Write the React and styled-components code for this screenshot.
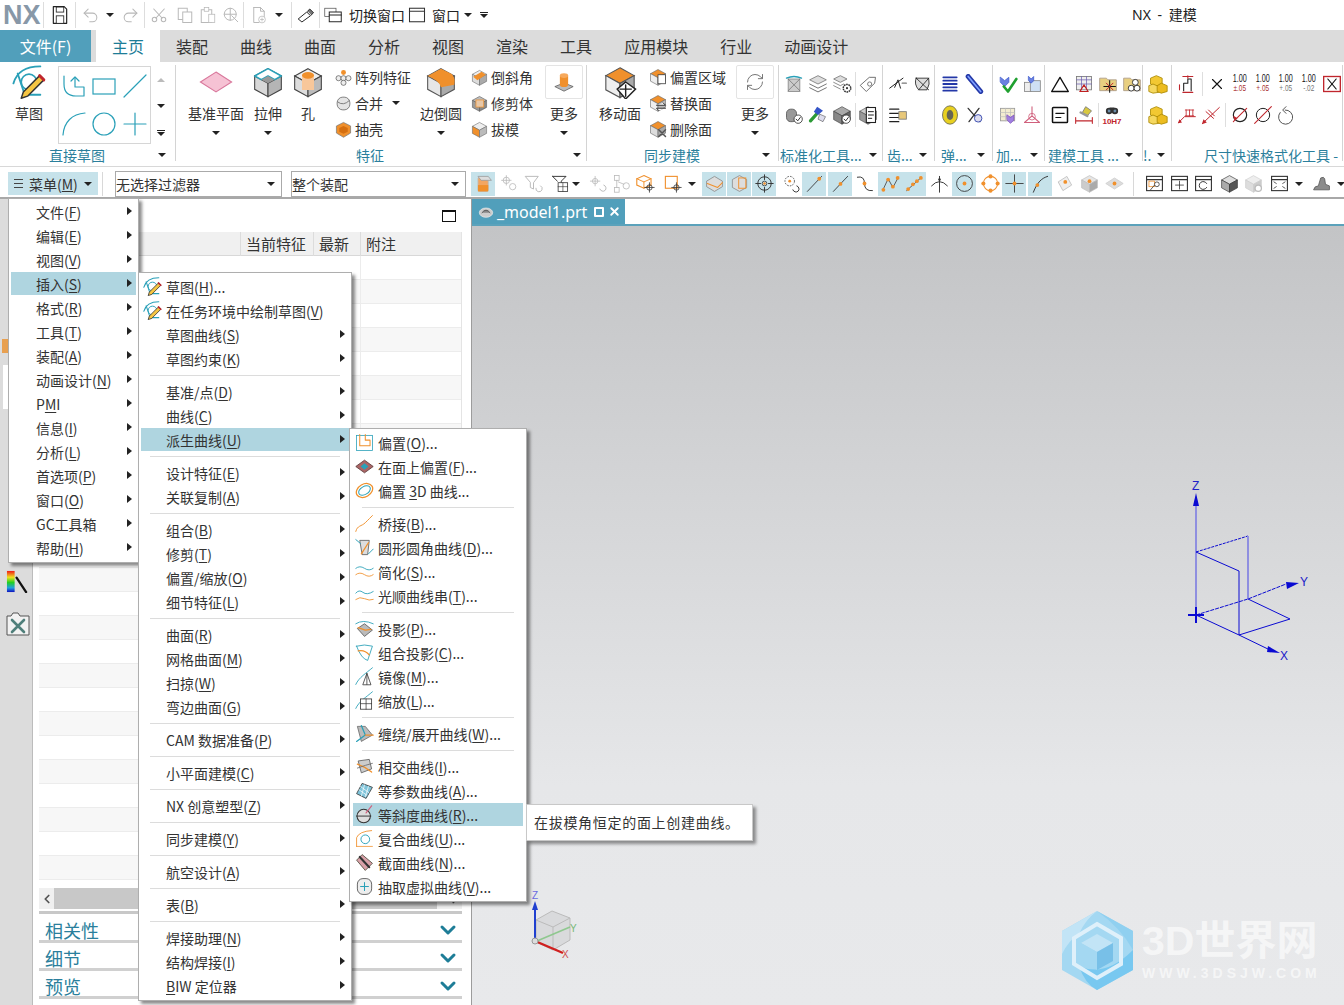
import React from "react";
import styled, { createGlobalStyle } from "styled-components";
import { RefreshCw, Undo2, Redo2, ChevronLeft, ChevronRight, ChevronDown, X } from "lucide-react";

const TEAL = "#2aa0b8";
const ORANGE = "#f0902c";
const DARK = "#333";
const LABEL = "#2b7f9c";
const FADE = "#b8b8b8";
const RED = "#c0262d";

const GlobalStyle = createGlobalStyle`
  html, body { margin: 0; padding: 0; background: #fff; }
  body {
    font-family: "Noto Sans CJK SC", "Noto Sans", sans-serif;
    font-size: 14px;
    color: #333;
    overflow: hidden;
  }
`;

const cube = (t, l, r, stroke = "#666") => (
  <>
    <polygon points="12,2 22,7.5 12,13 2,7.5" fill={t} stroke={stroke} strokeWidth=".8" />
    <polygon points="2,7.5 12,13 12,23 2,17.5" fill={l} stroke={stroke} strokeWidth=".8" />
    <polygon points="22,7.5 12,13 12,23 22,17.5" fill={r} stroke={stroke} strokeWidth=".8" />
  </>
);
const p = (d, c = DARK, w = 1.3, fill = "none") => <path d={d} stroke={c} strokeWidth={w} fill={fill} strokeLinecap="round" strokeLinejoin="round" />;
const dot = (x, y, r = 2.4, c = ORANGE) => <circle cx={x} cy={y} r={r} fill={c} />;
const target = (x, y, c = DARK) => (
  <>
    <circle cx={x} cy={y} r="3.4" fill="none" stroke={c} strokeWidth="1" />
    {p(`M${x - 6} ${y}H${x + 6}M${x} ${y - 6}V${y + 6}`, c, 1)}
  </>
);
const winFrame = (
  <>
    <rect x="2" y="3" width="20" height="18" fill="#fff" stroke={DARK} strokeWidth="1.4" />
    {p("M2 7H22", DARK, 1.6)}
  </>
);

const ICONS = {
  sketch: (
    <>
      {p("M1 13C3 6 9 1 20 1", TEAL)}
      <circle cx="12" cy="12" r="5.5" fill="none" stroke={TEAL} strokeWidth="1.2" />
      {p("M4 6L9 21H20", TEAL)}
      {p("M22.5 10.5L11 22l-4.5 1.5L8 19 19.5 7.5z", "#333", 1, "#f5c542")}
      {p("M19.5 7.5l3 3", RED, 2)}
    </>
  ),
  profile: (
    <>
      {p("M2 2V10Q2 22 14 22H22V13H13V4", TEAL, 1.2)}
      {p("M9 7l4-4 4 4", TEAL, 1.2)}
    </>
  ),
  rect: <rect x="1" y="5" width="22" height="15" fill="none" stroke={TEAL} strokeWidth="1.2" />,
  line: p("M1 23L23 1", TEAL, 1.2),
  arc: p("M1 23C2 10 10 2 23 1", TEAL, 1.2),
  circle: <circle cx="12" cy="12" r="11" fill="none" stroke={TEAL} strokeWidth="1.2" />,
  plus: p("M12 1V23M1 12H23", TEAL, 1.2),
  datum: <polygon points="12,5 23,12 12,19 1,12" fill="#f6c2d4" stroke="#d9789c" strokeWidth=".8" />,
  extrude: (
    <>
      {cube("#eee", "#d8d8d8", "#b5b5b5", "#444")}
      {p("M2 7.5L12 2L22 7.5L17 10.3L12 7.5L7 10.3Z", TEAL, 1.1, "#fff")}
      <polygon points="7,10.3 12,7.5 17,10.3 12,13" fill="#999" />
    </>
  ),
  hole: (
    <>
      {cube("#eee", "#ddd", "#bbb", "#444")}
      <rect x="7.5" y="7" width="9" height="11" fill="#f8c79a" />
      <ellipse cx="12" cy="7" rx="4.5" ry="2.5" fill={ORANGE} />
    </>
  ),
  blend: (
    <>
      {cube("#eee", "#e6e6e6", "#aaa", "#555")}
      <path d="M2 7.5L12 2L20 6Q23 9 22 14L12 16Q11 11 2 7.5Z" fill={ORANGE} />
    </>
  ),
  moreFeat: (
    <>
      <polygon points="12,13 22,17 12,22 2,17" fill="#bbb" stroke="#555" strokeWidth=".8" />
      <rect x="7.5" y="5" width="9" height="10" fill={ORANGE} />
      <ellipse cx="12" cy="5" rx="4.5" ry="2.5" fill="#f7a95c" />
      <ellipse cx="12" cy="15" rx="4.5" ry="2.5" fill={ORANGE} />
    </>
  ),
  moveFace: (
    <>
      {cube(ORANGE, "#eee", "#aaa", "#555")}
      <polygon points="16,12 23,17 16,24 10,17" fill="#fff" stroke="#222" strokeWidth="1" />
      {p("M16 14V22M12 17H20", "#222", 1)}
    </>
  ),
  pattern: (
    <>
      <circle cx="12" cy="5" r="3.5" fill={ORANGE} />
      <circle cx="5" cy="13" r="3.6" fill="#eee" stroke="#555" />
      <circle cx="12" cy="13" r="3.6" fill="#eee" stroke="#555" />
      <circle cx="19" cy="13" r="3.6" fill="#eee" stroke="#555" />
      <circle cx="12" cy="19.5" r="3.6" fill="#eee" stroke="#555" />
    </>
  ),
  unite: (
    <>
      <rect x="3" y="3" width="18" height="18" rx="8" fill="#e4e4e4" stroke="#555" />
      {p("M4 10Q12 16 20 8", "#555", 1)}
    </>
  ),
  shell: (
    <>
      <polygon points="12,2 22,7 22,17 12,23 2,17 2,7" fill={ORANGE} stroke="#777" />
      <polygon points="12,7 18,10 18,15 12,18 6,15 6,10" fill="#d56f10" />
    </>
  ),
  chamfer: (
    <>
      {cube("#eee", "#ddd", "#aaa")}
      <polygon points="3,11 15,4 21,8 9,16" fill={ORANGE} />
    </>
  ),
  trim: (
    <>
      {cube("#bbb", "#999", "#888", "#555")}
      <rect x="7" y="7" width="11" height="10" fill="#e8c8a8" stroke={ORANGE} />
    </>
  ),
  draft: cube("#eee", ORANGE, "#bbb"),
  offsetRegion: (
    <>
      {cube(ORANGE, "#eee", "#bbb")}
      <rect x="12" y="9" width="10" height="12" fill="#fff" stroke="#333" />
    </>
  ),
  replaceFace: (
    <>
      {cube(ORANGE, "#eee", "#bbb")}
      {p("M10 15H22l-3-3M22 19H10l3 3", "#222", 1.2, "#fff")}
    </>
  ),
  deleteFace: (
    <>
      {cube(ORANGE, "#ddd", "#aaa")}
      {p("M13 13l9 9M22 13l-9 9", "#555", 2)}
    </>
  ),
  normalize: (
    <>
      <rect x="5" y="6" width="14" height="15" fill="#ccc" stroke="#888" />
      {p("M3 5Q12 1 21 5", TEAL, 1.6)}
      {p("M5 20L19 6M5 6L19 20", "#777", 1)}
    </>
  ),
  layers: (
    <>
      <polygon points="12,2 22,7 12,12 2,7" fill="#ddd" stroke="#777" />
      {p("M2 12l10 5 10-5", "#777", 1.2)}
      {p("M2 16.5l10 5 10-5", "#777", 1.2)}
    </>
  ),
  gearStack: (
    <>
      <polygon points="10,2 18,6 10,10 2,6" fill="#ddd" stroke="#777" />
      {p("M2 10l8 4 4-2M2 14l8 4", "#777", 1)}
      <circle cx="18" cy="17" r="4.5" fill="#fff" stroke="#333" strokeWidth="1.8" strokeDasharray="2 .8" />
      <circle cx="18" cy="17" r="1.3" fill="#333" />
    </>
  ),
  tag: (
    <>
      {p("M14 4l7 0-1 7-10 10-7-7z", "#666", 1.1, "#fff")}
      <circle cx="14" cy="12" r="2.5" fill="none" stroke="#666" />
    </>
  ),
  cylCheck: (
    <>
      <rect x="3" y="5" width="12" height="15" rx="5" fill="#999" stroke="#555" />
      <circle cx="17" cy="17" r="5" fill="#fff" stroke="#333" />
      {p("M14.5 17l2 2 3-4", "#333", 1.2)}
    </>
  ),
  wrench: (
    <>
      {p("M3 19L12 9", "#2c9a36", 4)}
      <polygon points="11,2 18,7 12,12 7,8" fill="#3555c8" />
      <polygon points="14,11 21,14 18,20 12,17" fill="#dde" stroke="#333333" strokeWidth=".6" />
    </>
  ),
  boxCheck: (
    <>
      {cube("#aaa", "#888", "#666", "#444")}
      <circle cx="17" cy="17" r="5" fill="#fff" stroke="#333" />
      {p("M14.5 17l2 2 3-4", "#333", 1.2)}
    </>
  ),
  doc: (
    <>
      {cube("#ccc", "#999", "#888", "#555")}
      <rect x="10" y="3" width="11" height="18" fill="#fff" stroke="#222" strokeWidth="1.3" />
      {p("M12.5 8h6M12.5 12h6M12.5 16h4", "#222", 1.2)}
    </>
  ),
  lineSign: (
    <>
      {p("M2 17L18 5", "#222", 1.2)}
      {p("M8 16l4-9 3 10", "#222", 1.2)}
      {p("M17 11h5", "#777", 1.6)}
    </>
  ),
  grayShell: (
    <>
      {p("M5 5L20 5Q22 12 18 19L8 19Q2 12 5 5Z", "#222", 1, "#ddd")}
      {p("M5 5L20 19M20 5L8 19", "#222", 1)}
    </>
  ),
  lines: (
    <>
      {p("M2 5h11M2 10h11M2 15h11M2 20h11", "#222", 1.4)}
      <rect x="13" y="8" width="9" height="9" fill="#e8c87a" stroke="#777" />
    </>
  ),
  coil: p("M4 4h16M4 8h16M4 12h16M4 16h16M4 20h16", "#2438a8", 2.2),
  spring: (
    <>
      {p("M5 3L20 21", "#2438a8", 6)}
      {p("M5 3L20 21", "#7fa0ff", 2)}
    </>
  ),
  washer: (
    <>
      <ellipse cx="12" cy="12" rx="9" ry="11" fill="#e8d020" stroke="#665" />
      <ellipse cx="12" cy="12" rx="4" ry="6" fill="#665" />
    </>
  ),
  cutter: (
    <>
      {p("M5 4l14 16M18 4L6 20", "#333", 1.6)}
      <circle cx="17" cy="16" r="4.5" fill="#dde" stroke="#2438a8" />
    </>
  ),
  partCheck: (
    <>
      {p("M3 4l5 4 5-4v6l-5 5-5-5z", "#4460d0", 1, "#6a80e0")}
      {p("M7 15l5 6L22 6", "#20a030", 3.2)}
    </>
  ),
  partSheet: (
    <>
      <rect x="3" y="10" width="8" height="11" fill="#eee" stroke="#888" />
      <rect x="10" y="8" width="12" height="13" fill="#cfe0f4" stroke="#888" />
      {p("M8 3l3 3 3-3v5l-3 3-3-3z", "#4460d0", 1, "#6a80e0")}
    </>
  ),
  gridPart: (
    <>
      <rect x="3" y="4" width="17" height="15" fill="#f3ecd0" stroke="#999" />
      {p("M3 9h17M3 14h17M9 4v15M15 4v15", "#bbb", 0.8)}
      {p("M11 12l4 3 4-3v6l-4 4-4-4z", "#8050c0", 1, "#a080e0")}
    </>
  ),
  axisPink: (
    <>
      {p("M12 2v11L3 21M12 13l9 8M3 21h18", "#d0607c", 1.3)}
      <circle cx="12" cy="14" r="4" fill="none" stroke="#d0607c" />
    </>
  ),
  triangle: p("M12 4L22 21H2Z", "#111", 1.6),
  tablePin: (
    <>
      <rect x="3" y="3" width="18" height="16" fill="#eee" stroke="#777" />
      {p("M3 7h18M9 3v16M15 3v16M3 12h18", "#7060b0", 0.9)}
      {p("M12 13l5 8H7z", "#c02020", 1.4)}
    </>
  ),
  folderCross: (
    <>
      <path d="M2 5h8l2 2h10v13H2z" fill="#e8cf80" stroke="#a98" />
      {p("M14 8v14M7 15h14", "#111", 1.2)}
      {p("M10 11l8 8M18 11l-8 8", RED, 1.2)}
    </>
  ),
  folderNodes: (
    <>
      <path d="M2 5h8l2 2h10v13H2z" fill="#e8cf80" stroke="#a98" />
      <circle cx="11" cy="17" r="3.5" fill="#fff" stroke="#222" />
      <circle cx="18" cy="17" r="3.5" fill="#fff" stroke="#222" />
      <circle cx="16" cy="10" r="3.5" fill="#fff" stroke="#222" />
    </>
  ),
  note: (
    <>
      <rect x="3" y="3" width="18" height="18" rx="1" fill="#fff" stroke="#111" strokeWidth="1.8" />
      {p("M7 10h10M7 15h6", "#111", 1.4)}
    </>
  ),
  brushDim: (
    <>
      <polygon points="14,2 21,7 16,13 10,9" fill="#d8c840" stroke="#777" />
      {p("M2 15v7M22 15v7M3 19h18", RED, 1.3)}
      {p("M8 9l8 4", "#999", 3)}
    </>
  ),
  binoculars: (
    <>
      <circle cx="7" cy="12" r="5.5" fill="#333" />
      <circle cx="17" cy="12" r="5.5" fill="#333" />
      <circle cx="7" cy="12" r="2.4" fill="#6a8ca8" />
      <circle cx="17" cy="12" r="2.4" fill="#6a8ca8" />
      <rect x="8" y="6" width="8" height="4" fill="#333" />
    </>
  ),
  goldBoxes: (
    <>
      <polygon points="10,2 17,5 17,12 10,15 3,12 3,5" fill="#f2c832" stroke="#a80" />
      <polygon points="6,12 13,15 13,22 6,23 1,21 1,14" fill="#f5d860" stroke="#a80" />
      <polygon points="16,11 23,14 23,21 16,23 11,21 11,14" fill="#ecbc20" stroke="#a80" />
    </>
  ),
  dimBox: (
    <>
      {p("M8 20V11h5V6h4v14", "#222", 1.3)}
      {p("M7 3h12M7 22h12M13 2v3M3 13v6", RED, 1.3)}
    </>
  ),
  bigX: p("M6 6L18 18M18 6L6 18", "#111", 1.5),
  boxedX: (
    <>
      <rect x="2" y="3" width="20" height="18" fill="#fff" stroke={RED} strokeWidth="1.6" />
      {p("M7 6L17 18M17 6L7 18", "#111", 1.4)}
    </>
  ),
  leader: (
    <>
      {p("M2 21L9 14H22", RED, 1.2)}
      <polygon points="1,22 3,17 6,21" fill={RED} />
      {p("M11 6v7M15 6v7M19 6v7M10 6h10M10 13h10", RED, 1)}
    </>
  ),
  leaderDiag: (
    <>
      {p("M2 22L22 3", RED, 1.2)}
      {p("M6 8l9 8M9 6l7 7", RED, 1.2)}
      <polygon points="1,23 3,17 7,21" fill={RED} />
    </>
  ),
  diaDark: (
    <>
      <circle cx="12" cy="12" r="8" fill="none" stroke="#222" strokeWidth="1.4" />
      {p("M4 20L20 4", RED, 1.3)}
      <polygon points="5,18 4,13 9,16" fill={RED} />
    </>
  ),
  diaLight: (
    <>
      <circle cx="12" cy="12" r="8" fill="none" stroke="#222" strokeWidth="1.2" />
      {p("M2 22L22 2", RED, 1.3)}
    </>
  ),
  undoGray: (
    <>
      {p("M5 9a8.5 8.5 0 1 0 6-3", "#555", 1.2)}
      {p("M12 2L8 6l4 4", "#555", 1.2)}
    </>
  ),
  save: (
    <>
      {p("M4 2H17L20 5V22H4Z", "#222", 1.4, "#fff")}
      <rect x="7.5" y="2.5" width="9" height="6" fill="#fff" stroke="#222" />
      <rect x="7.5" y="13" width="9" height="9" fill="#fff" stroke="#222" />
    </>
  ),
  cut: (
    <>
      <circle cx="6" cy="18" r="3" fill="none" stroke={FADE} strokeWidth="1.4" />
      <circle cx="18" cy="18" r="3" fill="none" stroke={FADE} strokeWidth="1.4" />
      {p("M8 16L19 4M16 16L5 4", FADE, 1.4)}
    </>
  ),
  copy: (
    <>
      <rect x="3" y="3" width="12" height="15" fill="#fff" stroke={FADE} strokeWidth="1.3" />
      <rect x="9" y="8" width="12" height="14" fill="#fff" stroke={FADE} strokeWidth="1.3" />
    </>
  ),
  paste: (
    <>
      <rect x="3" y="5" width="14" height="17" fill="#fff" stroke={FADE} strokeWidth="1.3" />
      <rect x="7" y="2" width="6" height="5" fill="#fff" stroke={FADE} />
      <rect x="13" y="11" width="8" height="11" fill="#fff" stroke={FADE} />
    </>
  ),
  deleteGlob: (
    <>
      <circle cx="11" cy="11" r="8" fill="none" stroke={FADE} strokeWidth="1.3" />
      {p("M11 3v16M3 11h16M13 13l8 8", FADE, 1.3)}
    </>
  ),
  newDoc: (
    <>
      {p("M5 2h9l5 5v7M5 2v20h7M14 2v5h5", FADE, 1.3)}
      <circle cx="16" cy="18" r="4.5" fill="#fff" stroke={FADE} />
      {p("M16 16v4M14 18h4", FADE, 1)}
    </>
  ),
  touch: (
    <>
      {p("M2 17L13 8l5 5-11 8z", "#222", 1.3, "#fff")}
      {p("M14 7l3-3 5 5-3 3", "#222", 1.3, "#777")}
    </>
  ),
  swWin: (
    <>
      <rect x="1" y="3" width="15" height="11" fill="#fff" stroke="#555" />
      <rect x="7" y="8" width="16" height="13" fill="#fff" stroke="#222" strokeWidth="1.3" />
      {p("M7 12H23", "#222", 1.4)}
    </>
  ),
  winOne: winFrame,
  filterCube: (
    <>
      <rect x="5" y="4" width="13" height="18" rx="2" fill="#f2a662" stroke="#bbb" />
      <polygon points="5,3 18,3 22,8 9,8" fill="#ddd" stroke="#999" />
      <rect x="5" y="14" width="13" height="8" fill={ORANGE} />
    </>
  ),
  linkFade: (
    <>
      <circle cx="8" cy="8" r="4" fill="none" stroke={FADE} />
      <circle cx="16" cy="16" r="4" fill="none" stroke={FADE} />
      {p("M2 8H14M8 2V14", FADE, 1)}
    </>
  ),
  funnelFade: (
    <>
      {p("M2 3H18L12 11V19L8 17V11Z", FADE, 1.2)}
      {p("M15 18a4 4 0 1 0 6-3", FADE, 1.2)}
    </>
  ),
  funnelGrid: (
    <>
      {p("M2 3H19L13 9V13M8 9L2 3", "#333", 1.2)}
      <rect x="9" y="11" width="12" height="11" fill="#fff" stroke="#333" />
      {p("M9 16h12M15 11v11", "#333", 0.8)}
    </>
  ),
  targetFade: (
    <>
      {target(9, 9, FADE)}
      {p("M15 19a4 4 0 1 0 5-5", FADE, 1.2)}
    </>
  ),
  nodesFade: (
    <>
      <rect x="3" y="2" width="6" height="6" fill="none" stroke={FADE} />
      <rect x="3" y="17" width="6" height="6" fill="none" stroke={FADE} />
      <circle cx="18" cy="15" r="4" fill="none" stroke={FADE} />
      {p("M6 8V17M8 10L15 13", FADE, 1)}
    </>
  ),
  cubeTarget: (
    <>
      <polygon points="10,2 19,6 19,14 10,18 1,14 1,6" fill="none" stroke={ORANGE} strokeWidth="1.4" />
      {p("M1 6l9 4 9-4M10 10v8", ORANGE, 1.2)}
      {target(17, 17)}
    </>
  ),
  rectTarget: (
    <>
      <rect x="3" y="3" width="15" height="15" fill="none" stroke={ORANGE} strokeWidth="1.4" />
      {target(17, 17)}
    </>
  ),
  viewCut: (
    <>
      <polygon points="12,3 22,9 22,16 12,22 2,16 2,9" fill="#ddd" stroke="#888" />
      {p("M3 12L16 17L22 11", ORANGE, 1.3)}
    </>
  ),
  viewBox: (
    <>
      <polygon points="12,2 21,7 21,17 12,22 3,17 3,7" fill="#ddd" stroke="#888" />
      <rect x="11" y="5" width="9" height="13" fill="none" stroke={ORANGE} strokeWidth="1.2" />
    </>
  ),
  crossCircle: (
    <>
      <circle cx="12" cy="12" r="8.5" fill="none" stroke="#333" strokeWidth="1.2" />
      <circle cx="12" cy="12" r="3" fill="none" stroke="#333" />
      {p("M12 1V7M12 17V23M1 12H7M17 12H23", "#333", 1.2)}
      {dot(12, 12, 1.6)}
    </>
  ),
  crossReset: (
    <>
      <circle cx="11" cy="9" r="6" fill="none" stroke="#333" strokeDasharray="2 1.5" />
      {dot(11, 9, 1.8)}
      {p("M15 20a4 4 0 1 0 5-5", "#333", 1.2)}
    </>
  ),
  lineEnd: (
    <>
      {p("M3 22L21 3", "#333", 1.1)}
      {dot(18, 6, 2.4)}
    </>
  ),
  lineMid: (
    <>
      {p("M3 22L21 3", "#333", 1.1)}
      {dot(12, 12.5, 2.4)}
    </>
  ),
  sCurve: (
    <>
      {p("M3 4Q12 2 12 12T22 21", "#333", 1.2)}
      {dot(12, 12, 2.4)}
    </>
  ),
  knots: (
    <>
      {p("M2 21L9 6L15 17L22 4", "#555", 1.2)}
      {dot(3, 20)}
      {dot(9, 7)}
      {dot(15, 16)}
      {dot(21, 5)}
    </>
  ),
  knotLine: (
    <>
      {p("M2 21L21 4", "#555", 1.2)}
      {dot(4, 19)}
      {dot(10, 13)}
      {dot(15, 9)}
      {dot(20, 5)}
    </>
  ),
  axisFork: (
    <>
      {p("M12 23V3M2 15Q12 4 22 15", "#333", 1.2)}
      {dot(12, 7, 1.6, "#333")}
    </>
  ),
  centerDot: (
    <>
      <circle cx="12" cy="12" r="10" fill="none" stroke="#333" strokeWidth="1.1" />
      {dot(12, 12)}
    </>
  ),
  quadrant: (
    <>
      <circle cx="12" cy="12" r="9" fill="none" stroke={ORANGE} strokeWidth="1.3" />
      {dot(12, 3, 2.6)}
      {dot(12, 21, 2.6)}
      {dot(3, 12, 2.6)}
      {dot(21, 12, 2.6)}
    </>
  ),
  intersect: (
    <>
      {p("M12 1V23M1 12H23", "#333", 1.1)}
      {dot(12, 12)}
    </>
  ),
  curveDot: (
    <>
      {p("M3 23C8 10 14 5 21 3", "#333", 1.2)}
      {dot(8, 14)}
    </>
  ),
  faceDot: (
    <>
      <polygon points="4,10 15,3 21,14 10,21" fill="#eee" stroke="#bbb" />
      {dot(13, 10)}
    </>
  ),
  solidDot: (
    <>
      {cube("#e5e5e5", "#ccc", "#aaa", "#bbb")}
      {dot(12, 9)}
    </>
  ),
  planeDot: (
    <>
      <polygon points="12,5 23,12 12,19 1,12" fill="#ddd" stroke="#ccc" />
      {dot(12, 12)}
    </>
  ),
  winSearch: (
    <>
      {winFrame}
      <rect x="5" y="9" width="7" height="7" fill="none" stroke={ORANGE} />
      {p("M12 14L7 20", "#333", 1)}
      <circle cx="15" cy="13" r="3" fill="#fff" stroke="#333" />
    </>
  ),
  winMove: (
    <>
      {winFrame}
      {p("M12 9v10M7 14h10", "#333", 1)}
    </>
  ),
  winRotate: (
    <>
      {winFrame}
      {p("M16 12a5 5 0 1 0 0 5", "#333", 1.2)}
    </>
  ),
  solidGray: cube("#ddd", "#aaa", "#555", "#333"),
  gearFade: (
    <>
      {cube("#eee", "#ddd", "#ccc", "#ccc")}
      <circle cx="18" cy="18" r="4" fill="#fff" stroke="#bbb" strokeWidth="1.6" />
    </>
  ),
  winFit: (
    <>
      {winFrame}
      {p("M5 10l3 2M5 18l3-2M19 10l-3 2M19 18l-3-2", "#333", 1)}
    </>
  ),
  render: <path d="M2 20Q3 15 8 15L11 5Q15 3 16 6L17 13L22 15V20Z" fill="#8c8c8c" stroke="#555" />,
  mOffset: (
    <>
      <rect x="2" y="3" width="20" height="19" fill="#fff" stroke={TEAL} />
      {p("M6 2V16H19V9H13V2", ORANGE, 1.3)}
    </>
  ),
  mFaceOff: (
    <>
      <polygon points="12,4 23,12 12,20 1,12" fill="#a66" stroke="#533" />
      <polygon points="12,8 17,12 12,16 7,12" fill={TEAL} />
    </>
  ),
  m3d: (
    <>
      <ellipse cx="12" cy="12" rx="11" ry="8" transform="rotate(-30 12 12)" fill="none" stroke={ORANGE} strokeWidth="1.6" />
      <ellipse cx="12" cy="12" rx="8" ry="5" transform="rotate(-30 12 12)" fill="none" stroke={TEAL} strokeWidth="1.3" />
    </>
  ),
  mBridge: p("M1 22C3 14 8 16 13 11S19 5 22 2", ORANGE, 1.2),
  mFillet: (
    <>
      <polygon points="6,3 18,3 16,21 9,21" fill="#ddd" stroke="#555" />
      {p("M8 20L17 6", ORANGE, 1.6)}
      {p("M1 2L7 7M23 14L17 20", TEAL, 1.2)}
    </>
  ),
  mSimple: (
    <>
      {p("M1 8Q6 4 12 8T23 8", TEAL, 1.1)}
      {p("M1 16Q6 12 12 16T23 16", ORANGE, 1.1, "none")}
    </>
  ),
  mSmooth: (
    <>
      {p("M1 9Q5 4 10 8T23 7", TEAL, 1.1)}
      {p("M1 17Q6 13 12 16T23 17", ORANGE, 1.1)}
    </>
  ),
  mProject: (
    <>
      <polygon points="3,12 12,6 22,14 12,22" fill="#bbb" stroke="#555" />
      {p("M4 11L13 14L20 13", ORANGE, 1.6)}
      {p("M1 6Q10 0 23 6", TEAL, 1.1)}
    </>
  ),
  mCombine: (
    <>
      {p("M2 4Q12 1 22 4L16 22Q8 20 2 4Z", TEAL, 1.1, "#fff")}
      {p("M4 10Q12 8 18 15", ORANGE, 1.6)}
    </>
  ),
  mMirror: (
    <>
      {p("M1 22C5 13 14 8 22 1", TEAL, 1.1)}
      {p("M10 22L15 8L20 22ZM15 8V22", "#333", 1)}
    </>
  ),
  mScale: (
    <>
      {p("M1 22C5 13 14 8 22 1", TEAL, 1.1)}
      <rect x="7" y="10" width="14" height="13" fill="#fff" stroke="#333" />
      {p("M14 10V23M7 16H21", "#333", 0.9)}
    </>
  ),
  mWrap: (
    <>
      <polygon points="3,3 13,3 22,14 8,22" fill="#bbb" stroke="#666" />
      {p("M8 2L13 14L2 22", TEAL, 1.6)}
      {p("M13 14H23", ORANGE, 1.6)}
    </>
  ),
  mIntersect: (
    <>
      <polygon points="4,5 18,3 21,15 8,20" fill="#ccc" stroke="#555" />
      {p("M3 9Q12 12 21 19", ORANGE, 1.6)}
      {p("M3 14Q14 10 22 8", "#666", 1)}
    </>
  ),
  mIso: (
    <>
      <polygon points="9,3 22,8 14,22 2,16" fill="#7fc4da" stroke="#333" />
      {p("M7 7L18 15M5 11L15 18M12 5L8 19M17 7L13 20", "#fff", 0.9)}
    </>
  ),
  mSlope: (
    <>
      <circle cx="11" cy="14" r="8.5" fill="#ddd" stroke="#333" strokeWidth="1.3" />
      {p("M2 14H20", "#333", 1.2)}
      {p("M14 10L21 1", "#d0607c", 1.5)}
    </>
  ),
  mComposite: (
    <>
      {p("M2 22V11Q5 3 21 2", ORANGE, 1.1)}
      <circle cx="13" cy="13" r="5.5" fill="none" stroke={TEAL} strokeWidth="1.2" />
      {p("M2 22H22", ORANGE, 1)}
    </>
  ),
  mSection: (
    <>
      <polygon points="9,2 22,13 13,22 2,9" fill="#d8a0a8" stroke="#443" />
      {p("M6 5L18 18", "#333", 2.6)}
    </>
  ),
  mVirtual: (
    <>
      <rect x="3" y="2" width="18" height="20" rx="7" fill="#eee" stroke="#444" />
      {p("M12 7V17M7 12H17", TEAL, 1.3)}
    </>
  ),
  colorBar: (
    <>
      <defs>
        <linearGradient id="spectrum" x1="0" x2="0" y1="0" y2="1">
          <stop offset="0" stopColor="#f01818" />
          <stop offset=".3" stopColor="#f0e020" />
          <stop offset=".55" stopColor="#20d020" />
          <stop offset=".8" stopColor="#20a0e0" />
          <stop offset="1" stopColor="#1010c0" />
        </linearGradient>
      </defs>
      <rect x="1" y="1" width="8" height="22" fill="url(#spectrum)" />
      {p("M11 8L21 23", "#111", 2.4)}
    </>
  ),
  toolsTab: (
    <>
      <path d="M1 4H5L7 1H12L14 4H23V23H1Z" fill="#f2f2f2" stroke="#555" />
      {p("M6 8L18 20M18 8L6 20", "#4f7f7a", 2.6)}
    </>
  ),
  restoreTab: (
    <>
      <ellipse cx="12" cy="13" rx="10" ry="7" fill="#ccc" stroke="#eee" />
      {p("M6 13Q12 5 18 13", "#555", 1.4, "#888")}
    </>
  ),
};

const SvgIcon = styled.svg`
  display: block;
  flex: none;
`;
const Icon = ({ n, s = 20 }) => (
  <SvgIcon width={s} height={s} viewBox="0 0 24 24">
    {ICONS[n]}
  </SvgIcon>
);

const Page = styled.div`
  position: relative;
  width: 1344px;
  height: 1005px;
  overflow: hidden;
  display: flex;
  flex-direction: column;
  background: #fff;
`;

const Caret = styled.span`
  display: block;
  flex: none;
  margin-left: ${(p) => p.$ml || 0}px;
  width: 0;
  height: 0;
  border-left: 4px solid transparent;
  border-right: 4px solid transparent;
  border-top: 4px solid #222;
`;

/* quick access bar */
const QuickBar = styled.div`
  height: 30px;
  display: flex;
  align-items: center;
  position: relative;
  padding-left: 3px;
`;
const Logo = styled.div`
  width: 40px;
  font-family: "Liberation Sans", sans-serif;
  font-weight: 700;
  font-size: 27px;
  color: #8898a8;
`;
const QuickCell = styled.div`
  width: ${(p) => p.$w}px;
  height: 30px;
  display: flex;
  align-items: center;
  justify-content: center;
  flex: none;
`;
const QuickSep = styled.div`
  width: 1px;
  height: 26px;
  background: #ddd;
  flex: none;
`;
const QuickText = styled.span`
  line-height: 20px;
  margin-left: 4px;
  color: #222;
`;
const TitleText = styled.div`
  position: absolute;
  left: 1132px;
  top: 5px;
  line-height: 20px;
  font-family: "Noto Sans", "Noto Sans CJK SC", sans-serif;
  word-spacing: 3px;
  color: #222;
`;

/* tabs */
const TabBar = styled.div`
  height: 32px;
  display: flex;
  background: #dcdcdc;
`;
const FileTab = styled.div`
  width: 91px;
  margin-right: 5px;
  background: #519fbb;
  color: #fff;
  font-size: 16px;
  line-height: 32px;
  text-align: center;
`;
const Tab = styled.div`
  padding: 0 16px;
  font-size: 16px;
  line-height: 32px;
  color: ${(p) => (p.$active ? "#1e7d97" : "#333")};
  background: ${(p) => (p.$active ? "#fff" : "transparent")};
`;

/* ribbon */
const Ribbon = styled.div`
  height: 105px;
  box-sizing: border-box;
  padding: 3px 0 1px;
  display: flex;
  border-bottom: 1px solid #d8d8d8;
`;
const Group = styled.div`
  width: ${(p) => p.$w}px;
  flex: none;
  display: flex;
  flex-direction: column;
  box-sizing: border-box;
  border-right: 1px solid #d4d4d4;
  margin-bottom: 4px;
`;
const GroupBody = styled.div`
  flex: 1;
  display: flex;
  padding-left: ${(p) => p.$pl || 0}px;
`;
const GroupLabel = styled.div`
  height: 20px;
  margin-bottom: -4px;
  display: flex;
  align-items: center;
  white-space: nowrap;
  padding-left: ${(p) => p.$pl || 0}px;
  line-height: 20px;
  color: ${LABEL};
`;
const BigTool = styled.div`
  width: ${(p) => p.$w}px;
  margin-left: ${(p) => p.$ml || 0}px;
  display: flex;
  flex-direction: column;
  align-items: center;
  flex: none;
`;
const BigIcon = styled.div`
  height: 34px;
  display: flex;
  align-items: center;
  justify-content: center;
`;
const BigText = styled.div`
  margin-top: 4px;
  line-height: 20px;
  white-space: nowrap;
  color: #333;
`;
const BigCaret = styled.div`
  height: 12px;
  margin-top: 4px;
  display: flex;
  align-items: center;
`;
const MoreBox = styled.div`
  width: 38px;
  height: 34px;
  box-sizing: border-box;
  border: 1px solid #e4e4e4;
  border-radius: 2px;
  display: flex;
  align-items: center;
  justify-content: center;
`;
const SmallColumn = styled.div`
  width: ${(p) => p.$w}px;
  margin-left: ${(p) => p.$ml || 0}px;
  margin-top: -1px;
  flex: none;
`;
const SmallTool = styled.div`
  height: 26px;
  display: flex;
  align-items: center;
  gap: 3px;
  white-space: nowrap;
  color: #333;
`;
const Gallery = styled.div`
  width: 93px;
  height: 78px;
  box-sizing: border-box;
  margin-top: 1px;
  border: 1px solid #d6d6d6;
  display: grid;
  grid-template-columns: repeat(3, 1fr);
  place-items: center;
  flex: none;
`;
const GalleryScroll = styled.div`
  width: 20px;
  margin-top: 11px;
  display: flex;
  flex-direction: column;
  align-items: center;
  gap: 22px;
`;
const UpCaret = styled(Caret)`
  border-top: 0;
  border-bottom: 4px solid #bbb;
  margin-top: 2px;
`;
const MoreCaret = styled.div`
  width: 8px;
  border-top: 1px solid #222;
  display: flex;
  justify-content: center;
  padding-top: 1px;
`;
const IconStack = styled.div`
  padding-top: 3px;
`;
const IconRow = styled.div`
  height: 31px;
  display: flex;
  align-items: center;
`;
const IconCell = styled.div`
  width: ${(p) => p.$w || 24}px;
  height: 24px;
  display: flex;
  align-items: center;
  justify-content: center;
  flex: none;
`;
const IconSep = styled.div`
  width: ${(p) => p.$w || 2}px;
  height: 24px;
  flex: none;
  display: flex;
  justify-content: center;
  &::before {
    content: "";
    width: 1px;
    background: #dedede;
  }
`;
const DimIcon = styled.div`
  display: flex;
  flex-direction: column;
  align-items: center;
  font-family: "Liberation Sans", sans-serif;
  line-height: 10px;
  font-size: 10px;
  color: #111;
  transform: scaleX(0.72);
`;
const DimTol = styled.span`
  color: ${(p) => p.$c || "#a33"};
  font-size: 9px;
  line-height: 9px;
  white-space: pre;
  text-align: center;
`;
const ScopeIcon = styled.div`
  display: flex;
  flex-direction: column;
  align-items: center;
`;
const ScopeText = styled.span`
  font-family: "Liberation Sans", sans-serif;
  font-size: 8px;
  font-weight: 700;
  line-height: 8px;
  color: #c0262d;
`;

/* selection bar */
const SelectionBar = styled.div`
  height: 32px;
  box-sizing: border-box;
  display: flex;
  align-items: center;
  border-bottom: 2px solid #a8a8a8;
  padding: 3px 0 0 8px;
`;
const MenuButton = styled.div`
  width: 90px;
  height: 23px;
  flex: none;
  display: flex;
  align-items: center;
  background: #c6e2ea;
  padding-left: 6px;
  box-sizing: border-box;
  gap: 6px;
  color: #333;
`;
const Burger = styled.span`
  width: 9px;
  height: 7px;
  flex: none;
  border-top: 1px solid #444;
  border-bottom: 1px solid #444;
  position: relative;
  &::before {
    content: "";
    position: absolute;
    left: 0;
    right: 0;
    top: 3px;
    border-top: 1px solid #444;
  }
`;
const BarSep = styled.div`
  width: 1px;
  height: 24px;
  background: #d8d8d8;
  flex: none;
  margin-left: ${(p) => p.$ml}px;
`;
const Combo = styled.div`
  width: ${(p) => p.$w}px;
  height: 26px;
  margin-left: ${(p) => p.$ml}px;
  box-sizing: border-box;
  border: 1px solid #aaa;
  display: flex;
  align-items: center;
  justify-content: space-between;
  padding-right: 6px;
  flex: none;
  color: #333;
`;
const BarCell = styled.div`
  width: 24px;
  height: 24px;
  margin-left: ${(p) => p.$ml || 0}px;
  flex: none;
  display: flex;
  align-items: center;
  justify-content: center;
  background: ${(p) => (p.$active ? "#c6e2ea" : "transparent")};
`;

/* main */
const Main = styled.div`
  flex: 1;
  display: flex;
  min-height: 0;
`;
const ResourceBar = styled.div`
  width: 33px;
  flex: none;
  box-sizing: border-box;
  background: #dcdcdc;
  border-right: 1px solid #bcbcbc;
  display: flex;
  flex-direction: column;
  align-items: flex-start;
  padding-top: 140px;
`;
const ResOrange = styled.div`
  width: 7px;
  height: 14px;
  background: #e8a050;
  margin-left: 2px;
`;
const ResWhite = styled.div`
  width: 5px;
  height: 44px;
  background: #fff;
  margin: 12px 0 0 3px;
`;
const ResIcon = styled.div`
  margin: ${(p) => p.$mt}px 0 0 6px;
`;

const NavPanel = styled.div`
  width: 438px;
  flex: none;
  display: flex;
  flex-direction: column;
  padding: 0 9px 0 6px;
  box-sizing: border-box;
`;
const PanelHead = styled.div`
  height: 33px;
  display: flex;
  align-items: center;
  justify-content: flex-end;
  padding-right: 6px;
`;
const RestoreBtn = styled.div`
  width: 14px;
  height: 12px;
  box-sizing: border-box;
  border: 1px solid #111;
  border-top-width: 2px;
`;
const Table = styled.div`
  height: 656px;
  border-right: 1px solid #e4e4e4;
  overflow: hidden;
`;
const TableHead = styled.div`
  height: 23px;
  display: grid;
  grid-template-columns: 201px 73px 47px 1fr;
  background: #f0f0f0;
  border-bottom: 1px solid #d8d8d8;
`;
const HeadCell = styled.div`
  font-size: 15px;
  line-height: 24px;
  padding-left: 5px;
  border-left: 1px solid #dcdcdc;
  color: #333;
`;
const TableRow = styled.div`
  height: 24px;
  box-sizing: border-box;
  border-bottom: 1px solid #ececec;
  background: ${(p) => (p.$stripe ? "#f7f7f7" : "#fff")};
  display: grid;
  grid-template-columns: 321px 1fr;
`;
const RowCell = styled.div`
  border-left: ${(p) => (p.$line ? "1px solid #ececec" : "0")};
`;
const HScroll = styled.div`
  height: 21px;
  display: flex;
  background: #f0f0f0;
`;
const ScrollBtn = styled.div`
  width: 15px;
  display: flex;
  align-items: center;
  justify-content: center;
  color: #555;
  flex: none;
`;
const ScrollThumb = styled.div`
  width: 383px;
  flex: none;
  background: #c8c8c8;
`;
const ScrollFill = styled.div`
  flex: 1;
`;
const PanelRule = styled.div`
  height: 3px;
  margin: 2px 0 1px;
  background: #c8c8c8;
`;
const Section = styled.div`
  height: 28px;
  box-sizing: border-box;
  border-bottom: 3px solid #d0d0d0;
  display: flex;
  align-items: center;
  justify-content: space-between;
  padding: 5px 2px 0 6px;
  font-size: 18px;
  line-height: 20px;
  color: ${LABEL};
`;

const GraphicArea = styled.div`
  flex: 1;
  min-width: 0;
  display: flex;
  flex-direction: column;
  border-left: 1px solid #9c9c9c;
`;
const DocStrip = styled.div`
  height: 25px;
  display: flex;
  background: #fff;
`;
const DocTab = styled.div`
  width: 153px;
  background: #519fbb;
  color: #fff;
  display: flex;
  align-items: center;
  padding-left: 6px;
  box-sizing: border-box;
  gap: 3px;
  font-family: "Noto Sans", sans-serif;
  font-size: 16px;
`;
const DocSave = styled.span`
  width: 10px;
  height: 10px;
  border: 2px solid #fff;
  border-radius: 1px;
  box-sizing: border-box;
  margin: 0 1px 0 4px;
  flex: none;
`;
const Viewer = styled.div`
  flex: 1;
  position: relative;
  border-top: 2px solid #5ba2bb;
  background: linear-gradient(#c3c4c6 0, #e6e7e9 560px, #e8e9eb 100%);
`;
const TriadSvg = styled.svg`
  position: absolute;
  left: ${(p) => p.$x}px;
  top: ${(p) => p.$y}px;
`;
const Watermark = styled.div`
  position: absolute;
  left: 589px;
  top: 684px;
  display: flex;
  gap: 8px;
`;
const WaterText = styled.div`
  display: flex;
  flex-direction: column;
  color: rgba(255, 255, 255, 0.6);
  font-family: "Liberation Sans", "Noto Sans CJK SC", sans-serif;
  font-weight: 700;
`;
const WaterTitle = styled.div`
  font-size: 41px;
  line-height: 50px;
  margin-top: 6px;
  white-space: nowrap;
`;
const WaterUrl = styled.div`
  font-size: 14px;
  letter-spacing: 4px;
  line-height: 16px;
  margin-top: -1px;
  white-space: nowrap;
`;

/* menus */
const Menu = styled.div`
  position: absolute;
  box-sizing: border-box;
  background: #fff;
  border: 1px solid #aeaeae;
  box-shadow: 3px 3px 3px rgba(0, 0, 0, 0.45);
`;
const MainMenu = styled(Menu)`
  left: 8px;
  top: 198px;
  width: 131px;
  padding: 1px 2px 2px;
`;
const SubMenu = styled(Menu)`
  left: 138px;
  top: 272px;
  width: 214px;
  padding: 2px;
`;
const CurveMenu = styled(Menu)`
  left: 349px;
  top: 428px;
  width: 178px;
  padding: 2px 3px;
`;
const Item = styled.div`
  height: 24px;
  box-sizing: border-box;
  border-bottom: 1px solid transparent;
  background-clip: padding-box;
  display: flex;
  align-items: center;
  position: relative;
  padding-left: 25px;
  line-height: 20px;
  white-space: pre;
  color: #333;
  background-color: ${(p) => (p.$active ? "#afd5e0" : "transparent")};
  u {
    text-underline-offset: 2px;
  }
`;
const ItemIcon = styled.div`
  position: absolute;
  left: 2px;
  top: 2px;
`;
const ItemArrow = styled.span`
  position: absolute;
  right: 4px;
  top: 7px;
  width: 0;
  height: 0;
  border-top: 4px solid transparent;
  border-bottom: 4px solid transparent;
  border-left: 5px solid #222;
`;
const MenuRule = styled.div`
  height: 9px;
  display: flex;
  align-items: center;
  padding: 0 9px;
  &::before {
    content: "";
    flex: 1;
    border-top: 1px solid #dcdcdc;
  }
`;
const Tooltip = styled.div`
  position: absolute;
  left: 526px;
  top: 804px;
  width: 227px;
  height: 37px;
  box-sizing: border-box;
  background: #fff;
  border: 1px solid #c8c8c8;
  box-shadow: 3px 3px 3px rgba(0, 0, 0, 0.4);
  padding-left: 7px;
  line-height: 34px;
  letter-spacing: 0.7px;
  color: #333;
`;

const accel = (text) => (
  <span>
    {text.split(/(&.)/).map((part, i) =>
      part[0] === "&" ? <u key={i}>{part[1]}</u> : part
    )}
  </span>
);

const mainItems = [
  "文件(&F)", "编辑(&E)", "视图(&V)", "插入(&S)", "格式(&R)", "工具(&T)", "装配(&A)", "动画设计(&N)",
  "P&MI", "信息(&I)", "分析(&L)", "首选项(&P)", "窗口(&O)", "GC工具箱", "帮助(&H)",
];

const subItems = [
  { t: "草图(&H)...", i: "sketch", noArrow: true },
  { t: "在任务环境中绘制草图(&V)", i: "sketch", noArrow: true },
  { t: "草图曲线(&S)" },
  { t: "草图约束(&K)" },
  null,
  { t: "基准/点(&D)" },
  { t: "曲线(&C)" },
  { t: "派生曲线(&U)", active: true },
  null,
  { t: "设计特征(&E)" },
  { t: "关联复制(&A)" },
  null,
  { t: "组合(&B)" },
  { t: "修剪(&T)" },
  { t: "偏置/缩放(&O)" },
  { t: "细节特征(&L)" },
  null,
  { t: "曲面(&R)" },
  { t: "网格曲面(&M)" },
  { t: "扫掠(&W)" },
  { t: "弯边曲面(&G)" },
  null,
  { t: "CAM 数据准备(&P)" },
  null,
  { t: "小平面建模(&C)" },
  null,
  { t: "NX 创意塑型(&Z)" },
  null,
  { t: "同步建模(&Y)" },
  null,
  { t: "航空设计(&A)" },
  null,
  { t: "表(&B)" },
  null,
  { t: "焊接助理(&N)" },
  { t: "结构焊接(&I)" },
  { t: "&BIW 定位器" },
];

const curveItems = [
  { t: "偏置(&O)...", i: "mOffset" },
  { t: "在面上偏置(&F)...", i: "mFaceOff" },
  { t: "偏置 &3D 曲线...", i: "m3d" },
  null,
  { t: "桥接(&B)...", i: "mBridge" },
  { t: "圆形圆角曲线(&D)...", i: "mFillet" },
  { t: "简化(&S)...", i: "mSimple" },
  { t: "光顺曲线串(&T)...", i: "mSmooth" },
  null,
  { t: "投影(&P)...", i: "mProject" },
  { t: "组合投影(&C)...", i: "mCombine" },
  { t: "镜像(&M)...", i: "mMirror" },
  { t: "缩放(&L)...", i: "mScale" },
  null,
  { t: "缠绕/展开曲线(&W)...", i: "mWrap" },
  null,
  { t: "相交曲线(&I)...", i: "mIntersect" },
  { t: "等参数曲线(&A)...", i: "mIso" },
  { t: "等斜度曲线(&R)...", i: "mSlope", active: true },
  { t: "复合曲线(&U)...", i: "mComposite" },
  { t: "截面曲线(&N)...", i: "mSection" },
  { t: "抽取虚拟曲线(&V)...", i: "mVirtual" },
];

const MenuList = ({ items, arrows = true }) =>
  items.map((it, idx) =>
    it === null ? (
      <MenuRule key={idx} />
    ) : (
      <Item key={idx} $active={it.active}>
        {it.i && (
          <ItemIcon>
            <Icon n={it.i} s={19} />
          </ItemIcon>
        )}
        {accel(it.t)}
        {arrows && !it.noArrow && <ItemArrow />}
      </Item>
    )
  );

const tabs = ["装配", "曲线", "曲面", "分析", "视图", "渲染", "工具", "应用模块", "行业", "动画设计"];

const barItems = [
  { n: "filterCube", a: 1, ml: 5 },
  { n: "linkFade", ml: 2 },
  { n: "funnelFade" },
  { n: "funnelGrid", ml: 3 },
  { caret: 1 },
  { n: "targetFade", ml: 5 },
  { n: "nodesFade" },
  { n: "cubeTarget" },
  { n: "rectTarget", ml: 3 },
  { caret: 1, ml: 4 },
  { n: "viewCut", a: 1, ml: 6 },
  { n: "viewBox", a: 1, ml: 1 },
  { n: "crossCircle", a: 1, ml: 1 },
  { n: "crossReset", ml: 2 },
  { n: "lineEnd", a: 1 },
  { n: "lineMid", a: 1, ml: 2 },
  { n: "sCurve" },
  { n: "knots", a: 1, ml: 2 },
  { n: "knotLine", a: 1 },
  { n: "axisFork", ml: 1 },
  { n: "centerDot", a: 1, ml: 1 },
  { n: "quadrant", ml: 2 },
  { n: "intersect", a: 1 },
  { n: "curveDot", a: 1, ml: 2 },
  { n: "faceDot" },
  { n: "solidDot", ml: 1 },
  { n: "planeDot", ml: 1 },
  { sep: 1 },
  { n: "winSearch", ml: 8 },
  { n: "winMove", ml: 1 },
  { n: "winRotate" },
  { n: "solidGray", ml: 2 },
  { n: "gearFade" },
  { n: "winFit", ml: 2 },
  { caret: 1, ml: 4 },
  { n: "render", ml: 6 },
  { caret: 1, ml: 4 },
];

const Triad = () => (
  <TriadSvg $x={708} $y={243} width="130" height="200" viewBox="1180 470 130 200">
    <g stroke="#0a0ad2" strokeWidth="1" fill="none">
      <path d="M1196 507V616" stroke="#8f8fe0" strokeWidth="2" />
      <path d="M1196 553L1248 537" strokeDasharray="3 1" />
      <path d="M1248 537V600" stroke="#8f8fe0" strokeWidth="2" />
      <path d="M1196 553L1239 572V636" />
      <path d="M1196 616L1248 600L1286 585" strokeDasharray="4 1" />
      <path d="M1248 600L1290 620L1239 636" />
      <path d="M1196 616L1239 636L1270 651" />
      <path d="M1188 616H1204M1196 608V624" strokeWidth="2" />
    </g>
    <polygon points="1196,494 1193,507 1199,507" fill="#0a0ad2" />
    <polygon points="1299,584 1286,583 1287,590" fill="#0a0ad2" />
    <polygon points="1280,654 1268,647 1267,653" fill="#0a0ad2" />
    <g fill="#2020c8" fontFamily="Liberation Sans" fontSize="12">
      <text x="1192" y="491">Z</text>
      <text x="1300" y="587">Y</text>
      <text x="1280" y="661">X</text>
    </g>
  </TriadSvg>
);

const MiniTriad = () => (
  <TriadSvg $x={53} $y={658} width="60" height="80" viewBox="525 885 60 80">
    <g fill="none" stroke="#bbb">
      <polygon points="536,921 552,912 570,919 570,941 553,951 536,943" fill="#d9dadc" />
      <path d="M536 921L553 928L570 919M553 928V951" />
    </g>
    <path d="M535 905V942" stroke="#2040d0" strokeWidth="2" />
    <polygon points="535,902 532,911 538,911" fill="#2040d0" />
    <path d="M535 942L563 954" stroke="#d02020" strokeWidth="2.4" />
    <path d="M537 942L570 928" stroke="#8fc88f" strokeWidth="1.6" />
    <circle cx="535" cy="942" r="3" fill="#ddd" stroke="#999" />
    <g fontFamily="Liberation Sans" fontSize="10">
      <text x="532" y="900" fill="#6a6ae0">Z</text>
      <text x="570" y="933" fill="#78b878">Y</text>
      <text x="562" y="959" fill="#d05050">X</text>
    </g>
  </TriadSvg>
);

const HexLogo = () => (
  <svg width="73" height="81" viewBox="0 0 73 81">
    <polygon points="36,1 72,21 72,60 36,80 1,60 1,21" fill="#a4d8f2" />
    <path d="M36 1L72 21V40Q60 18 36 1Z" fill="#90d0f0" />
    <path d="M1 21L36 1Q24 10 18 24Q8 30 1 44Z" fill="#c2e4f6" />
    <path d="M72 60L36 80Q24 74 18 56Q44 68 72 40Z" fill="#78c8f0" />
    <polygon points="36,14 60,28 60,54 36,68 13,54 13,28" fill="none" stroke="#dff0fa" strokeWidth="4" />
    <polygon points="36,24 52,33 36,42 20,33" fill="#c2e4f6" />
    <polygon points="20,33 36,42 36,60 20,51" fill="#a4d8f2" />
    <polygon points="52,33 36,42 36,60 52,51" fill="#78c0e8" />
  </svg>
);

export default function App() {
  return (
    <Page>
      <GlobalStyle />
      <QuickBar>
        <Logo>NX</Logo>
        <QuickSep />
        <QuickCell $w={31}><Icon n="save" s={20} /></QuickCell>
        <QuickSep />
        <QuickCell $w={28}><Undo2 size={19} color={FADE} strokeWidth={1.3} /></QuickCell>
        <QuickCell $w={12}><Caret /></QuickCell>
        <QuickCell $w={28}><Redo2 size={19} color={FADE} strokeWidth={1.3} /></QuickCell>
        <QuickSep />
        <QuickCell $w={28}><Icon n="cut" s={18} /></QuickCell>
        <QuickCell $w={23}><Icon n="copy" s={18} /></QuickCell>
        <QuickCell $w={23}><Icon n="paste" s={18} /></QuickCell>
        <QuickCell $w={24}><Icon n="deleteGlob" s={18} /></QuickCell>
        <QuickSep />
        <QuickCell $w={29}><Icon n="newDoc" s={18} /></QuickCell>
        <QuickCell $w={12}><Caret /></QuickCell>
        <QuickCell $w={6} />
        <QuickSep />
        <QuickCell $w={27}><Icon n="touch" s={18} /></QuickCell>
        <QuickSep />
        <QuickCell $w={25}><Icon n="swWin" s={18} /></QuickCell>
        <QuickText>切换窗口</QuickText>
        <QuickCell $w={23}><Icon n="winOne" s={18} /></QuickCell>
        <QuickText>窗口</QuickText>
        <QuickCell $w={16}><Caret /></QuickCell>
        <QuickCell $w={16}><MoreCaret><Caret /></MoreCaret></QuickCell>
        <TitleText>NX - 建模</TitleText>
      </QuickBar>

      <TabBar>
        <FileTab>文件(F)</FileTab>
        <Tab $active>主页</Tab>
        {tabs.map((t) => (
          <Tab key={t}>{t}</Tab>
        ))}
      </TabBar>

      <Ribbon>
        <Group $w={176}>
          <GroupBody>
            <BigTool $w={58}>
              <BigIcon><Icon n="sketch" s={34} /></BigIcon>
              <BigText>草图</BigText>
            </BigTool>
            <Gallery>
              <Icon n="profile" s={24} />
              <Icon n="rect" s={24} />
              <Icon n="line" s={24} />
              <Icon n="arc" s={24} />
              <Icon n="circle" s={24} />
              <Icon n="plus" s={24} />
            </Gallery>
            <GalleryScroll>
              <UpCaret />
              <Caret />
              <MoreCaret><Caret /></MoreCaret>
            </GalleryScroll>
          </GroupBody>
          <GroupLabel $pl={49}>直接草图<Caret $ml={53} /></GroupLabel>
        </Group>

        <Group $w={411}>
          <GroupBody $pl={12}>
            <BigTool $w={56}>
              <BigIcon><Icon n="datum" s={34} /></BigIcon>
              <BigText>基准平面</BigText>
              <BigCaret><Caret /></BigCaret>
            </BigTool>
            <BigTool $w={28} $ml={10}>
              <BigIcon><Icon n="extrude" s={32} /></BigIcon>
              <BigText>拉伸</BigText>
              <BigCaret><Caret /></BigCaret>
            </BigTool>
            <BigTool $w={28} $ml={12}>
              <BigIcon><Icon n="hole" s={32} /></BigIcon>
              <BigText>孔</BigText>
            </BigTool>
            <SmallColumn $w={85} $ml={13}>
              <SmallTool><Icon n="pattern" s={17} />阵列特征</SmallTool>
              <SmallTool><Icon n="unite" s={17} />合并<Caret $ml={6} /></SmallTool>
              <SmallTool><Icon n="shell" s={17} />抽壳</SmallTool>
            </SmallColumn>
            <BigTool $w={42}>
              <BigIcon><Icon n="blend" s={32} /></BigIcon>
              <BigText>边倒圆</BigText>
              <BigCaret><Caret /></BigCaret>
            </BigTool>
            <SmallColumn $w={72} $ml={9}>
              <SmallTool><Icon n="chamfer" s={17} />倒斜角</SmallTool>
              <SmallTool><Icon n="trim" s={17} />修剪体</SmallTool>
              <SmallTool><Icon n="draft" s={17} />拔模</SmallTool>
            </SmallColumn>
            <BigTool $w={38} $ml={2}>
              <MoreBox><Icon n="moreFeat" s={22} /></MoreBox>
              <BigText>更多</BigText>
              <BigCaret><Caret /></BigCaret>
            </BigTool>
          </GroupBody>
          <GroupLabel $pl={180}>特征<Caret $ml={189} /></GroupLabel>
        </Group>

        <Group $w={192}>
          <GroupBody $pl={12}>
            <BigTool $w={42}>
              <BigIcon><Icon n="moveFace" s={34} /></BigIcon>
              <BigText>移动面</BigText>
            </BigTool>
            <SmallColumn $w={86} $ml={8}>
              <SmallTool><Icon n="offsetRegion" s={18} />偏置区域</SmallTool>
              <SmallTool><Icon n="replaceFace" s={18} />替换面</SmallTool>
              <SmallTool><Icon n="deleteFace" s={18} />删除面</SmallTool>
            </SmallColumn>
            <BigTool $w={38} $ml={1}>
              <MoreBox><RefreshCw size={20} color="#777" strokeWidth={1.2} /></MoreBox>
              <BigText>更多</BigText>
              <BigCaret><Caret /></BigCaret>
            </BigTool>
          </GroupBody>
          <GroupLabel $pl={57}>同步建模<Caret $ml={62} /></GroupLabel>
        </Group>

        <Group $w={104}>
          <GroupBody $pl={3}>
            <IconStack>
              <IconRow>
                <IconCell><Icon n="normalize" /></IconCell>
                <IconCell><Icon n="layers" /></IconCell>
                <IconCell><Icon n="gearStack" /></IconCell>
                <IconSep />
                <IconCell><Icon n="tag" /></IconCell>
              </IconRow>
              <IconRow>
                <IconCell><Icon n="cylCheck" /></IconCell>
                <IconCell><Icon n="wrench" /></IconCell>
                <IconCell><Icon n="boxCheck" /></IconCell>
                <IconSep />
                <IconCell><Icon n="doc" /></IconCell>
              </IconRow>
            </IconStack>
          </GroupBody>
          <GroupLabel $pl={1}>标准化工具...<Caret $ml={7} /></GroupLabel>
        </Group>

        <Group $w={52}>
          <GroupBody $pl={3}>
            <IconStack>
              <IconRow>
                <IconCell><Icon n="lineSign" /></IconCell>
                <IconCell><Icon n="grayShell" /></IconCell>
              </IconRow>
              <IconRow>
                <IconCell><Icon n="lines" /></IconCell>
              </IconRow>
            </IconStack>
          </GroupBody>
          <GroupLabel $pl={4}>齿...<Caret $ml={6} /></GroupLabel>
        </Group>

        <Group $w={58}>
          <GroupBody $pl={3}>
            <IconStack>
              <IconRow>
                <IconCell><Icon n="coil" /></IconCell>
                <IconCell><Icon n="spring" /></IconCell>
              </IconRow>
              <IconRow>
                <IconCell><Icon n="washer" /></IconCell>
                <IconCell><Icon n="cutter" /></IconCell>
              </IconRow>
            </IconStack>
          </GroupBody>
          <GroupLabel $pl={6}>弹...<Caret $ml={10} /></GroupLabel>
        </Group>

        <Group $w={52}>
          <GroupBody $pl={3}>
            <IconStack>
              <IconRow>
                <IconCell><Icon n="partCheck" /></IconCell>
                <IconCell><Icon n="partSheet" /></IconCell>
              </IconRow>
              <IconRow>
                <IconCell><Icon n="gridPart" /></IconCell>
                <IconCell><Icon n="axisPink" /></IconCell>
              </IconRow>
            </IconStack>
          </GroupBody>
          <GroupLabel $pl={3}>加...<Caret $ml={8} /></GroupLabel>
        </Group>

        <Group $w={98}>
          <GroupBody $pl={3}>
            <IconStack>
              <IconRow>
                <IconCell><Icon n="triangle" /></IconCell>
                <IconCell><Icon n="tablePin" /></IconCell>
                <IconCell><Icon n="folderCross" /></IconCell>
                <IconCell><Icon n="folderNodes" /></IconCell>
              </IconRow>
              <IconRow>
                <IconCell><Icon n="note" /></IconCell>
                <IconCell><Icon n="brushDim" /></IconCell>
                <IconSep $w={4} />
                <IconCell>
                  <ScopeIcon>
                    <Icon n="binoculars" s={14} />
                    <ScopeText>10H7</ScopeText>
                  </ScopeIcon>
                </IconCell>
              </IconRow>
            </IconStack>
          </GroupBody>
          <GroupLabel $pl={3}>建模工具 ...<Caret $ml={6} /></GroupLabel>
        </Group>

        <Group $w={29}>
          <GroupBody $pl={3}>
            <IconStack>
              <IconRow><IconCell><Icon n="goldBoxes" /></IconCell></IconRow>
              <IconRow><IconCell><Icon n="goldBoxes" /></IconCell></IconRow>
            </IconStack>
          </GroupBody>
          <GroupLabel>!.<Caret $ml={6} /></GroupLabel>
        </Group>

        <Group $w={171}>
          <GroupBody $pl={3}>
            <IconStack>
              <IconRow>
                <IconCell><Icon n="dimBox" /></IconCell>
                <IconSep $w={6} />
                <IconCell $w={23}><Icon n="bigX" s={18} /></IconCell>
                <IconCell $w={23}><DimIcon>1.00<DimTol>±.05</DimTol></DimIcon></IconCell>
                <IconCell $w={23}><DimIcon>1.00<DimTol>+.05</DimTol></DimIcon></IconCell>
                <IconCell $w={23}><DimIcon>1.00<DimTol $c="#777">+.05</DimTol></DimIcon></IconCell>
                <IconCell $w={23}><DimIcon>1.00<DimTol $c="#777">-.02</DimTol></DimIcon></IconCell>
                <IconCell $w={23}><Icon n="boxedX" /></IconCell>
              </IconRow>
              <IconRow>
                <IconCell><Icon n="leader" /></IconCell>
                <IconCell $w={23}><Icon n="leaderDiag" /></IconCell>
                <IconSep $w={6} />
                <IconCell $w={23}><Icon n="diaDark" /></IconCell>
                <IconCell $w={23}><Icon n="diaLight" /></IconCell>
                <IconCell $w={23}><Icon n="undoGray" /></IconCell>
              </IconRow>
            </IconStack>
          </GroupBody>
          <GroupLabel $pl={32}>尺寸快速格式化工具 -</GroupLabel>
        </Group>
      </Ribbon>

      <SelectionBar>
        <MenuButton>
          <Burger />
          <span>菜单(<u>M</u>)</span>
          <Caret />
        </MenuButton>
        <BarSep $ml={4} />
        <Combo $w={167} $ml={12}>无选择过滤器<Caret /></Combo>
        <Combo $w={175} $ml={9}>整个装配<Caret /></Combo>
        {barItems.map((b, i) =>
          b.caret ? (
            <Caret key={i} $ml={b.ml} />
          ) : b.sep ? (
            <BarSep key={i} $ml={7} />
          ) : (
            <BarCell key={i} $active={b.a} $ml={b.ml}>
              <Icon n={b.n} s={19} />
            </BarCell>
          )
        )}
      </SelectionBar>

      <Main>
        <ResourceBar>
          <ResOrange />
          <ResWhite />
          <ResIcon $mt={161}><Icon n="colorBar" s={23} /></ResIcon>
          <ResIcon $mt={19}><Icon n="toolsTab" s={24} /></ResIcon>
        </ResourceBar>

        <NavPanel>
          <PanelHead><RestoreBtn /></PanelHead>
          <Table>
            <TableHead>
              <HeadCell />
              <HeadCell>当前特征</HeadCell>
              <HeadCell>最新</HeadCell>
              <HeadCell>附注</HeadCell>
            </TableHead>
            {Array.from({ length: 26 }, (_, i) => (
              <TableRow key={i} $stripe={i % 2 === 1}>
                <RowCell />
                <RowCell $line />
              </TableRow>
            ))}
          </Table>
          <HScroll>
            <ScrollBtn><ChevronLeft size={14} strokeWidth={3} /></ScrollBtn>
            <ScrollThumb />
            <ScrollFill />
            <ScrollBtn><ChevronRight size={14} strokeWidth={3} /></ScrollBtn>
          </HScroll>
          <PanelRule />
          <Section>相关性<ChevronDown size={24} color="#1e7d97" strokeWidth={3} /></Section>
          <Section>细节<ChevronDown size={24} color="#1e7d97" strokeWidth={3} /></Section>
          <Section>预览<ChevronDown size={24} color="#1e7d97" strokeWidth={3} /></Section>
        </NavPanel>

        <GraphicArea>
          <DocStrip>
            <DocTab>
              <Icon n="restoreTab" s={16} />
              _model1.prt
              <DocSave />
              <X size={13} color="#fff" strokeWidth={3.5} />
            </DocTab>
          </DocStrip>
          <Viewer>
            <Triad />
            <MiniTriad />
            <Watermark>
              <HexLogo />
              <WaterText>
                <WaterTitle>3D世界网</WaterTitle>
                <WaterUrl>WWW.3DSJW.COM</WaterUrl>
              </WaterText>
            </Watermark>
          </Viewer>
        </GraphicArea>
      </Main>

      <MainMenu>
        {mainItems.map((t, i) => (
          <Item key={t} $active={i === 3}>
            {accel(t)}
            <ItemArrow />
          </Item>
        ))}
      </MainMenu>
      <SubMenu>
        <MenuList items={subItems} />
      </SubMenu>
      <CurveMenu>
        <MenuList items={curveItems} arrows={false} />
      </CurveMenu>
      <Tooltip>在拔模角恒定的面上创建曲线。</Tooltip>
    </Page>
  );
}
